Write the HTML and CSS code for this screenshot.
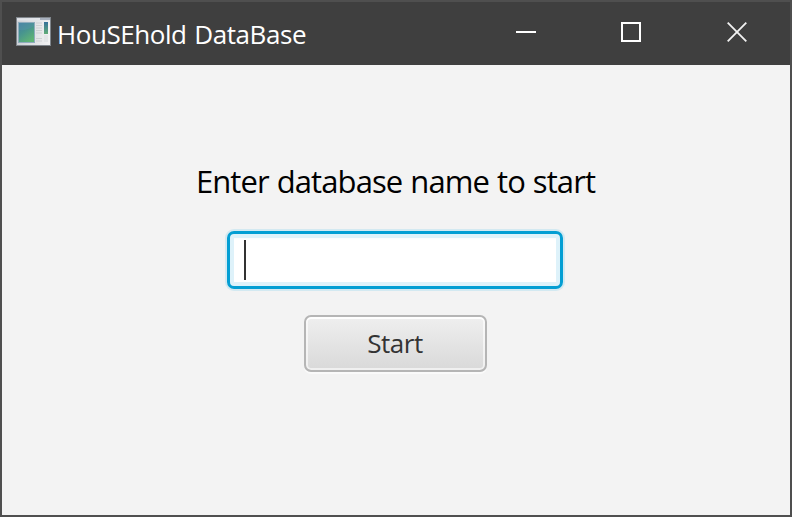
FILE: index.html
```html
<!DOCTYPE html>
<html lang="en">
<head>
<meta charset="utf-8">
<title>HouSEhold DataBase</title>
<link rel="stylesheet" href="styles.css">
</head>
<body>
<div class="window">
  <header class="titlebar">
    <svg class="app-icon" viewBox="0 0 35 29" aria-hidden="true">
      <defs>
        <linearGradient id="pane" x1="0" y1="0" x2=".6" y2="1"><stop offset="0" stop-color="#417da0"/><stop offset=".5" stop-color="#48958e"/><stop offset="1" stop-color="#5fb375"/></linearGradient>
        <linearGradient id="strip" x1="0" y1="0" x2="0" y2="1"><stop offset="0" stop-color="#36719a"/><stop offset="1" stop-color="#62ad78"/></linearGradient>
        <linearGradient id="frame" x1="0" y1="0" x2="1" y2="0"><stop offset="0" stop-color="#cdd0d5"/><stop offset="1" stop-color="#f2f2f3"/></linearGradient>
      </defs>
      <rect x=".5" y=".5" width="34" height="28" fill="url(#frame)" stroke="#7f858b"/>
      <path d="M1 1.5h33v2H1z" fill="#e1e4e9"/>
      <path d="M24 1h10v2H24z" fill="#a9b1be"/>
      <rect x="2.5" y="5.5" width="16" height="20" fill="url(#pane)" stroke="#8facbd"/>
      <path d="M3 13Q11 14 18 9V6H3z" fill="#5d91b2" opacity=".35"/>
      <path d="M20 6h6M20 8.500h6M20 11h6M20 13.500h6M20 16h6M20 21.500h6M20 24h6" stroke="#ced0d3" stroke-width="1.2"/>
      <path d="M28 5h4v12h-4z" fill="url(#strip)"/>
      <path d="M28 18h4v7h-4z" fill="#e2e4e6"/>
    </svg>
    <h1 class="title">HouSEhold DataBase</h1>
    <div class="controls">
      <svg class="control" viewBox="0 0 20 20"><path d="M0 9h20v2H0z" fill="#fff"/></svg>
      <svg class="control" viewBox="0 0 20 20"><path d="M1 1h18v18H1z" fill="none" stroke="#fff" stroke-width="2"/></svg>
      <svg class="control" viewBox="0 0 20 20"><path d="M.7.7l18.600 18.600M19.300.7L.7 19.300" stroke="#f2f2f2" stroke-width="1.800"/></svg>
    </div>
  </header>
  <main class="content">
    <p class="prompt">Enter database name to start</p>
    <div class="field" role="textbox" aria-label="Database name"><span class="caret"></span></div>
    <button class="start" type="button">Start</button>
  </main>
</div>
</body>
</html>
```
FILE: styles.css
```css
* { box-sizing: border-box; }
body { margin: 0; font-family: "Open Sans", "Noto Sans", sans-serif; }
.window {
  width: 792px;
  height: 517px;
  border: 2px solid #4f4f4f;
  background: #f3f3f3;
  display: flex;
  flex-direction: column;
}
.titlebar {
  height: 63px;
  background: #3f3f3f;
  display: flex;
  align-items: flex-start;
  padding: 15px 43px 0 14px;
}
.app-icon { width: 35px; height: 29px; }
.title {
  margin: 0 0 0 6px;
  font-size: 26px;
  line-height: 34px;
  font-weight: 400;
  letter-spacing: -0.45px;
  word-spacing: 1.6px;
  color: #fff;
  white-space: nowrap;
}
.controls { display: flex; gap: 86px; margin: 5px 0 0 auto; }
.control { width: 20px; height: 20px; display: block; }
.control:nth-child(2) { margin-left: -1px; }
.content {
  flex: 1;
  display: flex;
  flex-direction: column;
  align-items: center;
  padding: 94px 3px 0 0;
}
.prompt {
  margin: 0 0 0 2px;
  font-size: 31px;
  line-height: 44px;
  letter-spacing: -0.9px;
  word-spacing: 0.8px;
  white-space: nowrap;
  color: #000;
}
.field {
  width: 336px;
  height: 58px;
  margin-top: 28px;
  padding: 6px 0 0 14px;
  border: 3px solid #039ed3;
  border-radius: 7px;
  background: linear-gradient(#f3f3f3, #fff 6px) padding-box;
  box-shadow: 0 0 0 2px #d3e9f1, inset 0 0 0 4px #def2fa;
}
.caret { display: block; width: 2px; height: 40px; background: #333; }
.start {
  width: 183px;
  height: 57px;
  margin: 26px 0 0 1px;
  padding: 0 0 2px;
  border: 2px solid #b5b5b5;
  border-radius: 7px;
  background: linear-gradient(#efefef, #d9d9d9);
  box-shadow: 0 2px 0 #fafafa, inset 0 0 0 2px rgba(255, 255, 255, .6), inset 0 2px 0 #fcfcfc;
  font: 26px/50px "Open Sans", "Noto Sans", sans-serif;
  letter-spacing: -0.5px;
  color: #333;
}
```
